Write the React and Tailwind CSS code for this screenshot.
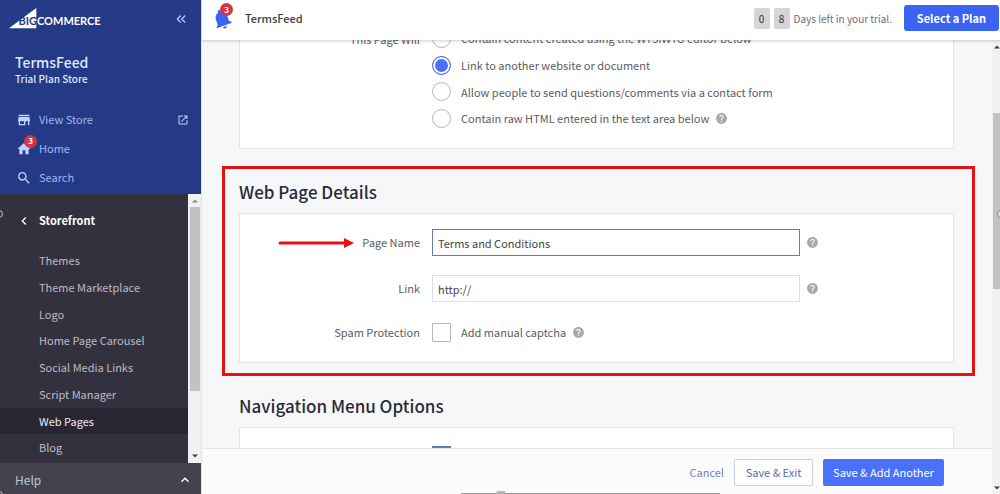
import React from "react";
import {
  MdStore,
  MdHome,
  MdSearch,
  MdOpenInNew,
  MdHelp,
  MdChevronLeft,
  MdExpandLess,
  MdKeyboardDoubleArrowLeft,
  MdNotifications,
} from "react-icons/md";

const storefrontLinks = [
  "Themes",
  "Theme Marketplace",
  "Logo",
  "Home Page Carousel",
  "Social Media Links",
  "Script Manager",
  "Web Pages",
  "Blog",
];

const pageTypes = [
  { id: "wysiwyg", label: "Contain content created using the WYSIWYG editor below" },
  { id: "link", label: "Link to another website or document" },
  { id: "contact", label: "Allow people to send questions/comments via a contact form" },
  { id: "html", label: "Contain raw HTML entered in the text area below", help: true },
];

function Logo() {
  return (
    <svg viewBox="0 0 92 21" className="h-[21px] w-[92px]" role="img" aria-label="BigCommerce">
      <path d="M0 20.3 27.3 0v20.3z" fill="#fff" />
      <text x="9.5" y="17.4" fontFamily="Lato, sans-serif" fontWeight="700" fontSize="11" fill="#253a87">
        BIG
      </text>
      <text x="28" y="17.4" fontFamily="Lato, sans-serif" fontWeight="700" fontSize="11" fill="#fff">
        COMMERCE
      </text>
    </svg>
  );
}

function Badge({ className }) {
  return (
    <span
      className={
        "absolute flex size-[13px] items-center justify-center rounded-full bg-[#d6353f] text-[8px] leading-3 font-bold text-white " +
        className
      }
    >
      3
    </span>
  );
}

function Help() {
  return <MdHelp className="size-[13px] shrink-0 text-[#a9a9a9]" aria-label="Help" />;
}

function Arrow({ up, className }) {
  return (
    <svg viewBox="0 0 6 4" className={"h-1 w-1.5 shrink-0 " + className} aria-hidden="true">
      <path d={up ? "M0 3.5 3 .5l3 3z" : "M0 .5h6l-3 3z"} fill="currentColor" />
    </svg>
  );
}

function Sidebar() {
  return (
    <aside className="flex w-[201px] shrink-0 flex-col bg-[#34313f]">
      <div className="flex h-[194px] shrink-0 flex-col bg-[#253a87]">
        <div className="flex items-center justify-between pt-2 pr-3 pl-[9px]">
          <Logo />
          <button type="button" aria-label="Collapse menu" className="text-[#b5c5ff]">
            <MdKeyboardDoubleArrowLeft className="size-4" />
          </button>
        </div>
        <div className="mt-6 pl-[15px]">
          <div className="text-[14px] leading-[18px] font-medium text-[#dfe6ff]">TermsFeed</div>
          <div className="text-[10px] leading-4 font-medium text-[#dfe6ff]">Trial Plan Store</div>
        </div>
        <nav className="mt-[18px] flex flex-col pr-3 pl-4 text-[11px] text-[#a3b5f5]">
          <a href="#view-store" className="flex h-[29px] items-center gap-[7px]">
            <MdStore className="size-4 text-[#c3cfff]" />
            <span className="flex-1">View Store</span>
            <MdOpenInNew className="size-3 text-[#c3cfff]" />
          </a>
          <a href="#home" className="flex h-[29px] items-center gap-[7px]">
            <span className="relative">
              <MdHome className="size-4 text-[#c3cfff]" />
              <Badge className="-top-1.5 left-2" />
            </span>
            Home
          </a>
          <a href="#search" className="flex h-[29px] items-center gap-[7px]">
            <MdSearch className="size-4 text-[#c3cfff]" />
            Search
          </a>
        </nav>
      </div>
      <div className="flex min-h-0 flex-1">
        <div className="flex min-w-0 flex-1 flex-col pb-0.5">
          <div className="flex h-[53px] shrink-0 items-center gap-[7px] pl-4 text-[11px] font-bold text-white">
            <MdChevronLeft className="size-4" />
            Storefront
          </div>
          <nav className="grid flex-1 auto-rows-fr text-[11px] text-[#bdbbc6]">
            {storefrontLinks.map((name) => (
              <a
                key={name}
                href="#storefront"
                className={
                  "flex items-center pl-[39px] " +
                  (name === "Web Pages" ? "bg-[#292634] text-[#ecebf2]" : "")
                }
              >
                {name}
              </a>
            ))}
          </nav>
        </div>
        <div className="flex w-[13px] flex-col items-center bg-[#f1f1f1] py-[5px]" aria-hidden="true">
          <Arrow up className="text-[#8a8a8a]" />
          <div className="mt-1 h-[184px] w-2.5 bg-[#c1c1c1]" />
          <div className="flex-1" />
          <Arrow className="text-[#404040]" />
        </div>
      </div>
      <button
        type="button"
        className="flex h-[31px] shrink-0 items-center justify-between bg-[#45424f] pt-0.5 pr-2 pl-[15px] text-xs text-[#bcc7cf]"
      >
        Help
        <MdExpandLess className="size-4 text-white" />
      </button>
    </aside>
  );
}

function TopBar() {
  return (
    <header className="relative z-10 flex h-10 shrink-0 items-center bg-white pr-px pl-2 shadow-[0_1px_3px_rgba(0,0,0,0.2)]">
      <button type="button" aria-label="Notifications" className="relative pb-0.5 text-[#3c64f4]">
        <MdNotifications className="size-6 -rotate-[20deg]" />
        <Badge className="-top-1 left-2.5" />
      </button>
      <div className="ml-[11px] flex-1 pb-1 text-[11px] font-medium text-[#3a3a42]">TermsFeed</div>
      <div className="flex items-center gap-1 pb-1 text-[10px] text-[#6b6d78]">
        <span className="flex h-[21px] w-4 items-center justify-center rounded-xs bg-[#d5d5d7] text-[#333]">0</span>
        <span className="flex h-[21px] w-4 items-center justify-center rounded-xs bg-[#d5d5d7] text-[#333]">8</span>
        <span>Days left in your trial.</span>
      </div>
      <button
        type="button"
        className="mb-1 ml-3 h-[26px] w-[95px] rounded-[3px] bg-[#3c64f4] text-[11px] font-bold text-white"
      >
        Select a Plan
      </button>
    </header>
  );
}

const card = "border border-[#e3e5e9] bg-white";
const heading = "text-[17px] leading-[26px] font-medium text-[#2b2b38]";
const label = "w-[180px] shrink-0 text-right";
const box = "size-[19px] shrink-0 appearance-none border border-[#b4b6bd] bg-white";

function PageTypeCard() {
  return (
    <fieldset className={"-mt-5 mr-[21px] ml-[17px] flex gap-3 pt-1 pb-4 " + card}>
      <div className={label + " pt-1.5"}>This Page Will</div>
      <div className="grid h-[107px] grid-rows-4">
        {pageTypes.map((type) => (
          <label key={type.id} className="flex items-center gap-2.5">
            <input
              type="radio"
              name="page-type"
              value={type.id}
              defaultChecked={type.id === "link"}
              className={
                box +
                " rounded-full checked:border-[#4c6fe0] checked:bg-[#4b71fc] checked:shadow-[inset_0_0_0_2px_#fff]"
              }
            />
            <span className="flex items-center gap-1.5">
              {type.label}
              {type.help && <Help />}
            </span>
          </label>
        ))}
      </div>
    </fieldset>
  );
}

function PageDetails() {
  return (
    <section className="mt-[17px] border-3 border-[#e51212] pt-2.5 pr-[18px] pb-2.5 pl-3.5">
      <h2 className={heading}>Web Page Details</h2>
      <div className={"mt-2 flex flex-col gap-[19px] pt-[15px] pb-[18px] " + card}>
        <div className="relative flex items-center gap-3">
          <svg
            viewBox="0 0 76 10"
            className="absolute left-[38px] h-2.5 w-[76px]"
            aria-hidden="true"
          >
            <path d="M2 5h65" stroke="#e60f0f" strokeWidth="3" strokeLinecap="round" />
            <path d="M66 0 76 5 66 10z" fill="#e60f0f" />
          </svg>
          <label htmlFor="page-name" className={label}>
            Page Name
          </label>
          <input
            id="page-name"
            type="text"
            defaultValue="Terms and Conditions"
            className="h-[27px] w-full max-w-[368px] border border-[#5f7bbd] bg-white px-[5px] text-[#444] outline-none"
          />
          <span className="-ml-1.5">
            <Help />
          </span>
        </div>
        <div className="flex items-center gap-3">
          <label htmlFor="page-link" className={label}>
            Link
          </label>
          <input
            id="page-link"
            type="text"
            defaultValue="http://"
            className="h-[27px] w-full max-w-[368px] border border-[#dcdde0] bg-white px-[5px] text-[#444] outline-none"
          />
          <span className="-ml-1.5">
            <Help />
          </span>
        </div>
        <div className="flex h-[23px] items-center gap-3">
          <span className={label}>Spam Protection</span>
          <label className="flex items-center gap-2.5">
            <input type="checkbox" className={box + " rounded-[1px]"} />
            <span className="flex items-center gap-1.5">
              Add manual captcha
              <Help />
            </span>
          </label>
        </div>
      </div>
    </section>
  );
}

function MenuOptions() {
  return (
    <section className="mt-[17px] pr-[21px] pl-[17px]">
      <h2 className={heading}>Navigation Menu Options</h2>
      <div className={"mt-2 flex pt-[18px] pb-5 pl-48 " + card}>
        <input
          type="checkbox"
          aria-label="Show in navigation menu"
          defaultChecked
          className="size-[19px] appearance-none bg-[#5f7bbd]"
        />
      </div>
    </section>
  );
}

export default function App() {
  return (
    <div className="relative flex h-screen overflow-hidden bg-[#f6f7f9] font-['Noto_Sans_CJK_SC','Noto_Sans_CJK_JP',sans-serif] text-[11px] text-[#5c5c62]">
      <Sidebar />
      <div className="flex min-w-0 flex-1 flex-col border-l border-[#dfe3f0]">
        <TopBar />
        <div className="flex min-h-0 flex-1">
          <div className="flex min-w-0 flex-1 flex-col">
            <main className="min-h-0 flex-1 overflow-hidden pr-[17px] pl-5">
              <PageTypeCard />
              <PageDetails />
              <MenuOptions />
            </main>
            <footer className="relative flex h-[46px] shrink-0 items-center justify-end gap-2.5 border-t border-[#e4e6e9] bg-[#fbfbfc] pt-px pr-12">
              <a href="#cancel" className="text-[#6d82cc]">
                Cancel
              </a>
              <button
                type="button"
                className="h-[27px] w-[79px] rounded-xs border border-[#c8d0ea] bg-white text-[#4f68bd]"
              >
                Save &amp; Exit
              </button>
              <button type="button" className="h-[27px] w-[121px] rounded-xs bg-[#4b71fc] text-white">
                Save &amp; Add Another
              </button>
              <span className="absolute bottom-0 left-[259px] h-px w-[259px] bg-[#9a9a9a]" />
              <span className="absolute bottom-0 left-[294px] h-[3px] w-2.5 rounded-t-full bg-[#b5b5b5]" />
            </footer>
          </div>
          <div className="flex w-2 flex-col items-end overflow-hidden bg-[#f1f1f1] pt-[5px] pb-1" aria-hidden="true">
            <Arrow up className="text-[#404040]" />
            <div className="mt-16 h-[176px] w-[7px] bg-[#c1c1c1]" />
            <div className="flex-1" />
            <Arrow className="text-[#404040]" />
          </div>
        </div>
      </div>
      <span className="absolute top-[210px] -left-[5px] size-2 rounded-full border border-[#c9c7d0]" />
      <span className="absolute top-[491px] -left-[5px] size-2 rounded-full border border-[#c9c7d0]" />
      <span className="absolute top-[210px] -right-[5px] size-2 rounded-full border border-[#888] bg-[#ddd]" />
    </div>
  );
}
